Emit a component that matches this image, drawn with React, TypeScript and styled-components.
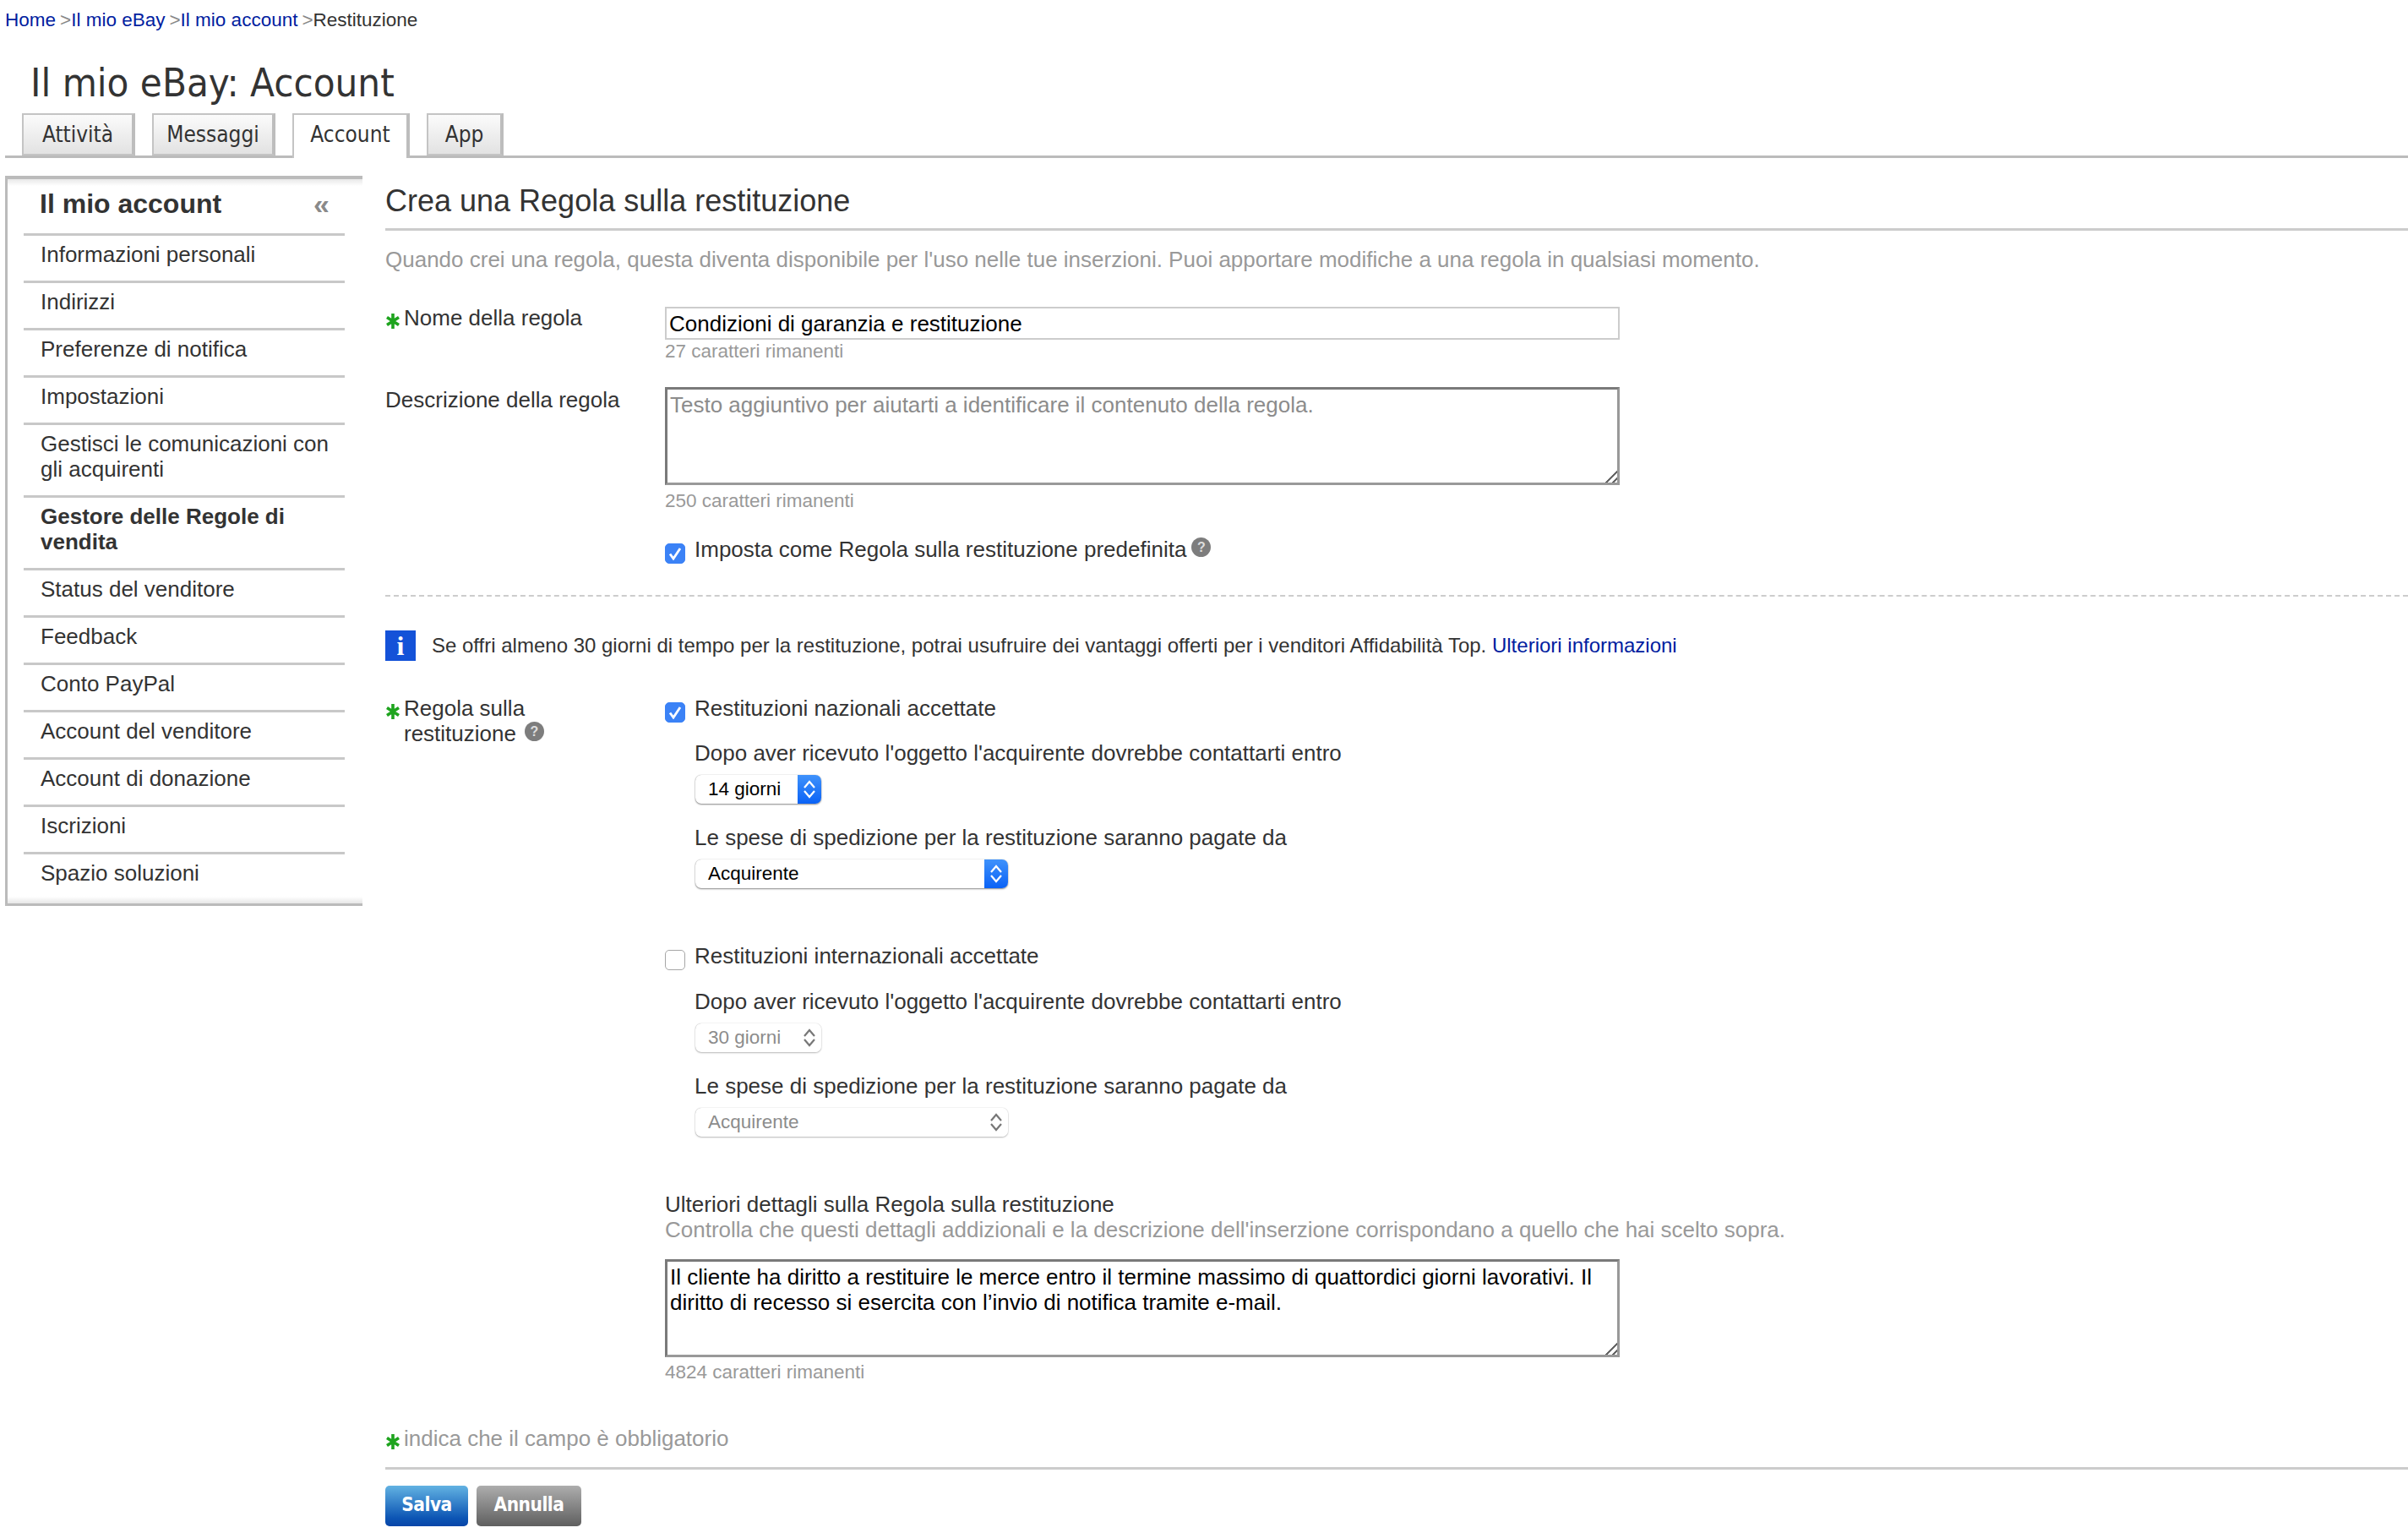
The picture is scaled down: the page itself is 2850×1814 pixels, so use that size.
import React from "react";
import styled, { createGlobalStyle } from "styled-components";

const GlobalStyle = createGlobalStyle`
  html, body {
    margin: 0;
    padding: 0;
    background: #fff;
    overflow: hidden;
  }
  body {
    font-family: "Liberation Sans", Arial, sans-serif;
    color: #333;
  }
`;

const Page = styled.div`
  width: 2850px;
  height: 1814px;
  overflow: hidden;
`;

const Breadcrumb = styled.div`
  height: 48px;
  line-height: 48px;
  padding-left: 6px;
  font-size: 22.5px;
  color: #333;
`;
const CrumbLink = styled.a`
  color: #00209f;
  text-decoration: none;
`;
const CrumbSep = styled.span`
  color: #888;
  margin-left: 5px;
`;

const Title = styled.h1`
  margin: 0;
  padding: 14px 0 0 36px;
  box-sizing: border-box;
  height: 86px;
  line-height: 72px;
  font-family: "DejaVu Sans Condensed", "DejaVu Sans", sans-serif;
  font-stretch: condensed;
  font-weight: normal;
  font-size: 47px;
  color: #333;
`;

const TabBar = styled.div`
  display: flex;
  gap: 20px;
  height: 50px;
  margin-left: 6px;
  padding-left: 20px;
  border-bottom: 3px solid #bbb;
`;
const Tab = styled.div<{ $active?: boolean; $w: number }>`
  box-sizing: border-box;
  width: ${(p) => p.$w}px;
  height: ${(p) => (p.$active ? 53 : 50)}px;
  border: 2px solid #c4c4c4;
  border-right: 4px solid #bdbdbd;
  border-bottom: ${(p) => (p.$active ? "none" : "2px solid #c4c4c4")};
  background: ${(p) => (p.$active ? "#fff" : "linear-gradient(#fbfbfb, #e2e2e2)")};
  text-align: center;
  line-height: 47px;
  font-family: "DejaVu Sans Condensed", "DejaVu Sans", sans-serif;
  font-stretch: condensed;
  font-size: 26px;
  color: #333;
`;

const Columns = styled.div`
  display: flex;
  margin-top: 21px;
`;

const SideBar = styled.nav`
  flex: none;
  box-sizing: border-box;
  width: 423px;
  height: 864px;
  margin-left: 6px;
  border-left: 3px solid #bbb;
  border-top: 4px solid #bbb;
  border-bottom: 3px solid #bbb;
  background: linear-gradient(#e8e8e8, #fff 8px, #fff calc(100% - 8px), #e6e6e6);
`;
const SideHead = styled.div`
  display: flex;
  align-items: center;
  justify-content: space-between;
  height: 64px;
  box-sizing: border-box;
  padding: 0 39px 6px 38px;
  font-size: 32px;
  font-weight: bold;
  color: #333;
`;
const Collapse = styled.span`
  font-size: 34px;
  color: #8a8a8a;
`;
const SideRow = styled.div<{ $bold?: boolean }>`
  margin-left: 19px;
  width: 380px;
  box-sizing: border-box;
  border-top: 3px solid #c8c8c8;
  padding: 7px 0 16px 20px;
  font-size: 26px;
  line-height: 30px;
  font-weight: ${(p) => (p.$bold ? "bold" : "normal")};
  color: #333;
`;

const Main = styled.main`
  flex: 1;
  margin-left: 27px;
  min-width: 0;
`;
const Heading = styled.h2`
  margin: 0;
  padding: 14px 0 16px;
  line-height: 32px;
  font-size: 36px;
  font-weight: normal;
  color: #333;
  border-bottom: 3px solid #ccc;
`;
const Intro = styled.p`
  margin: 19px 0 39px;
  line-height: 30px;
  font-size: 26px;
  color: #999;
`;

const FormRow = styled.div<{ $mt?: number }>`
  display: grid;
  grid-template-columns: 331px 1fr;
  margin-top: ${(p) => p.$mt ?? 0}px;
`;
const RowLabel = styled.div`
  display: flex;
  align-items: flex-start;
  font-size: 26px;
  line-height: 30px;
  color: #333;
`;
const Field = styled.div`
  min-width: 0;
`;
const StarBox = styled.span`
  flex: none;
  box-sizing: border-box;
  width: 22px;
  height: 30px;
  padding-bottom: 1px;
  display: flex;
  align-items: flex-end;
`;
const Star = () => (
  <StarBox>
    <svg width="18" height="20" viewBox="0 0 18 20">
      <path d="M9 1v18M2 5.5l14 9M16 5.5l-14 9" stroke="#1ea41e" strokeWidth="3.6" fill="none" />
    </svg>
  </StarBox>
);

const TextInput = styled.input`
  display: block;
  box-sizing: border-box;
  width: 1130px;
  height: 39px;
  margin-top: 2px;
  padding: 2px 3px 0;
  border: 2px solid #ccc;
  outline: none;
  font: 26px "Liberation Sans", Arial, sans-serif;
  color: #000;
`;
const TextArea = styled.textarea`
  display: block;
  box-sizing: border-box;
  width: 1130px;
  height: 116px;
  padding: 3px;
  border: 3px solid;
  border-color: #7a7a7a #999 #999 #7a7a7a;
  outline: none;
  font: 26px/30px "Liberation Sans", Arial, sans-serif;
  color: #000;
  &::placeholder {
    color: #8c8c8c;
    opacity: 1;
  }
  &::-webkit-resizer {
    background: linear-gradient(
      135deg,
      transparent 52%,
      #666 52%,
      #666 62%,
      transparent 62%,
      transparent 78%,
      #666 78%,
      #666 88%,
      transparent 88%
    );
  }
`;
const Hint = styled.div<{ $mt: number }>`
  margin-top: ${(p) => p.$mt}px;
  line-height: 26px;
  font-size: 22.5px;
  color: #999;
`;

const CheckLine = styled.div<{ $mt: number }>`
  display: flex;
  align-items: flex-start;
  gap: 11px;
  margin-top: ${(p) => p.$mt}px;
  font-size: 26px;
  line-height: 30px;
  color: #333;
`;
const Box = styled.span<{ $on?: boolean }>`
  flex: none;
  box-sizing: border-box;
  width: 24px;
  height: 24px;
  margin-top: 8px;
  border-radius: 5px;
  border: 1px solid ${(p) => (p.$on ? "#3b82f6" : "#a6a6a6")};
  background: ${(p) => (p.$on ? "#3b82f6" : "#fff")};
  display: flex;
  align-items: center;
  justify-content: center;
`;
const CheckBox = ({ on }: { on?: boolean }) => (
  <Box $on={on}>
    {on && (
      <svg width="16" height="16" viewBox="0 0 16 16">
        <path d="M2 8.5l4 5.5 8-12" stroke="#fff" strokeWidth="2.8" fill="none" />
      </svg>
    )}
  </Box>
);

const HelpDot = styled.span<{ $left: number }>`
  display: inline-block;
  width: 23px;
  height: 23px;
  margin-left: ${(p) => p.$left}px;
  border-radius: 50%;
  background: #7d7d7d;
  color: #ddd;
  font-size: 16px;
  font-weight: bold;
  line-height: 23px;
  text-align: center;
  vertical-align: 6px;
`;

const Dashed = styled.div`
  margin-top: 37px;
  border-top: 2px dashed #ccc;
`;

const Notice = styled.div`
  display: flex;
  align-items: center;
  gap: 19px;
  height: 36px;
  margin-top: 40px;
  font-size: 24px;
  color: #333;
`;
const InfoIcon = styled.span`
  flex: none;
  width: 36px;
  height: 36px;
  background: #1452d8;
  color: #fff;
  font-family: "Liberation Serif", serif;
  font-weight: bold;
  font-size: 32px;
  line-height: 36px;
  text-align: center;
`;
const MoreLink = styled.a`
  color: #00209f;
  text-decoration: none;
`;

const SubLabel = styled.div<{ $mt: number }>`
  margin-left: 35px;
  margin-top: ${(p) => p.$mt}px;
  font-size: 26px;
  line-height: 30px;
  color: #333;
`;

const SelectBox = styled.div<{ $w: number; $off?: boolean }>`
  display: flex;
  align-items: center;
  justify-content: space-between;
  box-sizing: border-box;
  width: ${(p) => p.$w}px;
  height: 34px;
  margin: 11px 0 0 36px;
  padding-left: 15px;
  border-radius: 7px;
  background: #fff;
  box-shadow: 0 1px 2px rgba(0, 0, 0, ${(p) => (p.$off ? 0.25 : 0.45)}), 0 0 1px rgba(0, 0, 0, 0.35);
  font-size: 22.5px;
  color: ${(p) => (p.$off ? "#8c8c8c" : "#000")};
  overflow: hidden;
`;
const Stepper = styled.span<{ $off?: boolean }>`
  flex: none;
  width: 28px;
  height: 34px;
  display: flex;
  align-items: center;
  justify-content: center;
  background: ${(p) => (p.$off ? "#fff" : "linear-gradient(#3f92fb, #0a62f6)")};
  color: ${(p) => (p.$off ? "#777" : "#fff")};
`;
const Select = ({ w, off, children }: { w: number; off?: boolean; children: React.ReactNode }) => (
  <SelectBox $w={w} $off={off}>
    {children}
    <Stepper $off={off}>
      <svg width="16" height="24" viewBox="0 0 16 24">
        <path d="M2 10l6-7 6 7M2 14l6 7 6-7" stroke="currentColor" strokeWidth="2.2" fill="none" />
      </svg>
    </Stepper>
  </SelectBox>
);

const DetailHead = styled.div`
  margin: 65px 0 0 331px;
  font-size: 26px;
  line-height: 30px;
  color: #333;
`;
const DetailNote = styled.div`
  margin-left: 331px;
  font-size: 26px;
  line-height: 30px;
  color: #999;
`;
const DetailBlock = styled.div`
  margin: 20px 0 0 331px;
`;

const Legend = styled.div`
  display: flex;
  margin-top: 50px;
  font-size: 26px;
  line-height: 30px;
  color: #999;
`;
const Rule = styled.div`
  margin-top: 19px;
  border-top: 3px solid #ccc;
`;
const Buttons = styled.div`
  display: flex;
  gap: 10px;
  margin-top: 19px;
`;
const Button = styled.button<{ $primary?: boolean; $w: number }>`
  width: ${(p) => p.$w}px;
  height: 48px;
  padding: 0 0 4px;
  border: none;
  border-radius: 5px;
  background: ${(p) =>
    p.$primary ? "linear-gradient(#62b2e2, #0c55b4 80%, #0845a8)" : "linear-gradient(#adadad, #5f5f5f)"};
  color: #fff;
  font-family: "DejaVu Sans Condensed", "DejaVu Sans", sans-serif;
  font-stretch: condensed;
  font-weight: bold;
  font-size: 22.5px;
  letter-spacing: -0.5px;
`;

const sideItems: { label: React.ReactNode; bold?: boolean }[] = [
  { label: "Informazioni personali" },
  { label: "Indirizzi" },
  { label: "Preferenze di notifica" },
  { label: "Impostazioni" },
  { label: "Gestisci le comunicazioni con gli acquirenti" },
  { label: "Gestore delle Regole di vendita", bold: true },
  { label: "Status del venditore" },
  { label: "Feedback" },
  { label: "Conto PayPal" },
  { label: "Account del venditore" },
  { label: "Account di donazione" },
  { label: "Iscrizioni" },
  { label: "Spazio soluzioni" },
];

const tabs = [
  { label: "Attività", w: 134 },
  { label: "Messaggi", w: 146 },
  { label: "Account", w: 139, active: true },
  { label: "App", w: 91 },
];

export default function App() {
  return (
    <Page>
      <GlobalStyle />
      <Breadcrumb>
        <CrumbLink href="#">Home</CrumbLink>
        <CrumbSep>&gt;</CrumbSep>
        <CrumbLink href="#">Il mio eBay</CrumbLink>
        <CrumbSep>&gt;</CrumbSep>
        <CrumbLink href="#">Il mio account</CrumbLink>
        <CrumbSep>&gt;</CrumbSep>
        Restituzione
      </Breadcrumb>
      <Title>Il mio eBay: Account</Title>
      <TabBar>
        {tabs.map((t) => (
          <Tab key={t.label} $w={t.w} $active={t.active}>
            {t.label}
          </Tab>
        ))}
      </TabBar>
      <Columns>
        <SideBar>
          <SideHead>
            Il mio account
            <Collapse>«</Collapse>
          </SideHead>
          {sideItems.map((item, i) => (
            <SideRow key={i} $bold={item.bold}>
              {item.label}
            </SideRow>
          ))}
        </SideBar>
        <Main>
          <Heading>Crea una Regola sulla restituzione</Heading>
          <Intro>
            Quando crei una regola, questa diventa disponibile per l'uso nelle tue inserzioni. Puoi apportare modifiche
            a una regola in qualsiasi momento.
          </Intro>
          <FormRow>
            <RowLabel>
              <Star />
              Nome della regola
            </RowLabel>
            <Field>
              <TextInput readOnly value="Condizioni di garanzia e restituzione" />
              <Hint $mt={1}>27 caratteri rimanenti</Hint>
            </Field>
          </FormRow>
          <FormRow $mt={29}>
            <RowLabel>Descrizione della regola</RowLabel>
            <Field>
              <TextArea readOnly placeholder="Testo aggiuntivo per aiutarti a identificare il contenuto della regola." />
              <Hint $mt={6}>250 caratteri rimanenti</Hint>
              <CheckLine $mt={29}>
                <CheckBox on />
                <span>
                  Imposta come Regola sulla restituzione predefinita
                  <HelpDot $left={6}>?</HelpDot>
                </span>
              </CheckLine>
            </Field>
          </FormRow>
          <Dashed />
          <Notice>
            <InfoIcon>i</InfoIcon>
            <span>
              Se offri almeno 30 giorni di tempo per la restituzione, potrai usufruire dei vantaggi offerti per i
              venditori Affidabilità Top. <MoreLink href="#">Ulteriori informazioni</MoreLink>
            </span>
          </Notice>
          <FormRow $mt={41}>
            <RowLabel>
              <Star />
              <span>
                Regola sulla
                <br />
                restituzione
                <HelpDot $left={10}>?</HelpDot>
              </span>
            </RowLabel>
            <Field>
              <CheckLine $mt={0}>
                <CheckBox on />
                Restituzioni nazionali accettate
              </CheckLine>
              <SubLabel $mt={21}>Dopo aver ricevuto l'oggetto l'acquirente dovrebbe contattarti entro</SubLabel>
              <Select w={149}>14 giorni</Select>
              <SubLabel $mt={25}>Le spese di spedizione per la restituzione saranno pagate da</SubLabel>
              <Select w={370}>Acquirente</Select>
              <CheckLine $mt={65}>
                <CheckBox />
                Restituzioni internazionali accettate
              </CheckLine>
              <SubLabel $mt={22}>Dopo aver ricevuto l'oggetto l'acquirente dovrebbe contattarti entro</SubLabel>
              <Select w={149} off>
                30 giorni
              </Select>
              <SubLabel $mt={25}>Le spese di spedizione per la restituzione saranno pagate da</SubLabel>
              <Select w={370} off>
                Acquirente
              </Select>
            </Field>
          </FormRow>
          <DetailHead>Ulteriori dettagli sulla Regola sulla restituzione</DetailHead>
          <DetailNote>
            Controlla che questi dettagli addizionali e la descrizione dell'inserzione corrispondano a quello che hai
            scelto sopra.
          </DetailNote>
          <DetailBlock>
            <TextArea
              readOnly
              value={
                "Il cliente ha diritto a restituire le merce entro il termine massimo di quattordici giorni lavorativi. Il diritto di recesso si esercita con l’invio di notifica tramite e-mail."
              }
            />
            <Hint $mt={5}>4824 caratteri rimanenti</Hint>
          </DetailBlock>
          <Legend>
            <Star />
            indica che il campo è obbligatorio
          </Legend>
          <Rule />
          <Buttons>
            <Button $primary $w={98}>
              Salva
            </Button>
            <Button $w={124}>Annulla</Button>
          </Buttons>
        </Main>
      </Columns>
    </Page>
  );
}
